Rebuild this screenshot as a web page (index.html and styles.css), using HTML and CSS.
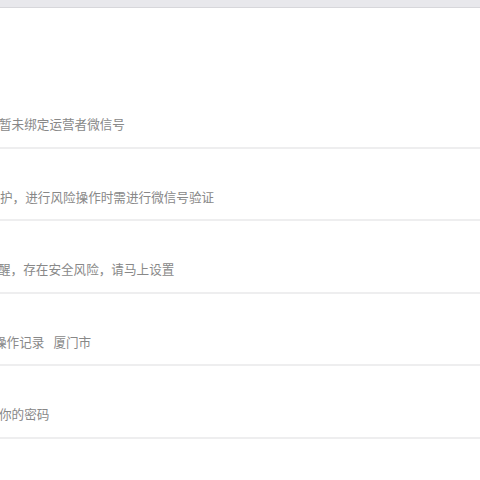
FILE: index.html
```html
<!DOCTYPE html>
<html lang="zh-CN">
<head>
    <meta charset="UTF-8">
    <meta name="viewport" content="width=device-width, initial-scale=1.0">
    <title>安全中心</title>
    <link rel="stylesheet" href="styles.css">
</head>
<body>
    <div class="topbar"></div>

    <div class="panel">
        <div class="panel-head"></div>

        <ul class="info-list">
            <li class="info-item">
                <span class="info-value shift-1">暂未绑定运营者微信号</span>
            </li>
            <li class="info-item">
                <span class="info-value shift-0">护，进行风险操作时需进行微信号验证</span>
            </li>
            <li class="info-item">
                <span class="info-value shift-2">醒，存在安全风险，请马上设置</span>
            </li>
            <li class="info-item">
                <span class="info-value shift-6">操作记录<span class="city">厦门市</span></span>
            </li>
            <li class="info-item">
                <span class="info-value shift-1">你的密码</span>
            </li>
        </ul>
    </div>
</body>
</html>
```

FILE: styles.css
```css
* {
    margin: 0;
    padding: 0;
    box-sizing: border-box;
}

html, body {
    width: 480px;
    height: 480px;
    overflow: hidden;
}

body {
    font-family: "Noto Sans CJK SC", "Microsoft YaHei", sans-serif;
    background-color: #fff;
    color: #888;
}

.topbar {
    height: 8px;
    background: #e8e8ec;
    border-bottom: 1px solid #d7d7db;
}

.panel {
    background: #fff;
}

.panel-head {
    height: 68px;
}

.info-list {
    list-style: none;
}

.info-item {
    height: 72.5px;
    padding-top: 34px;
    border-bottom: 2px solid #eeeeef;
    white-space: nowrap;
    overflow: hidden;
}

.info-value {
    display: inline-block;
    font-size: 12.6px;
    line-height: 20px;
}

.shift-0 { margin-left: 0; }
.shift-1 { margin-left: -1px; }
.shift-2 { margin-left: -2px; }
.shift-6 { margin-left: -6px; }

.city {
    margin-left: 9px;
}
```
